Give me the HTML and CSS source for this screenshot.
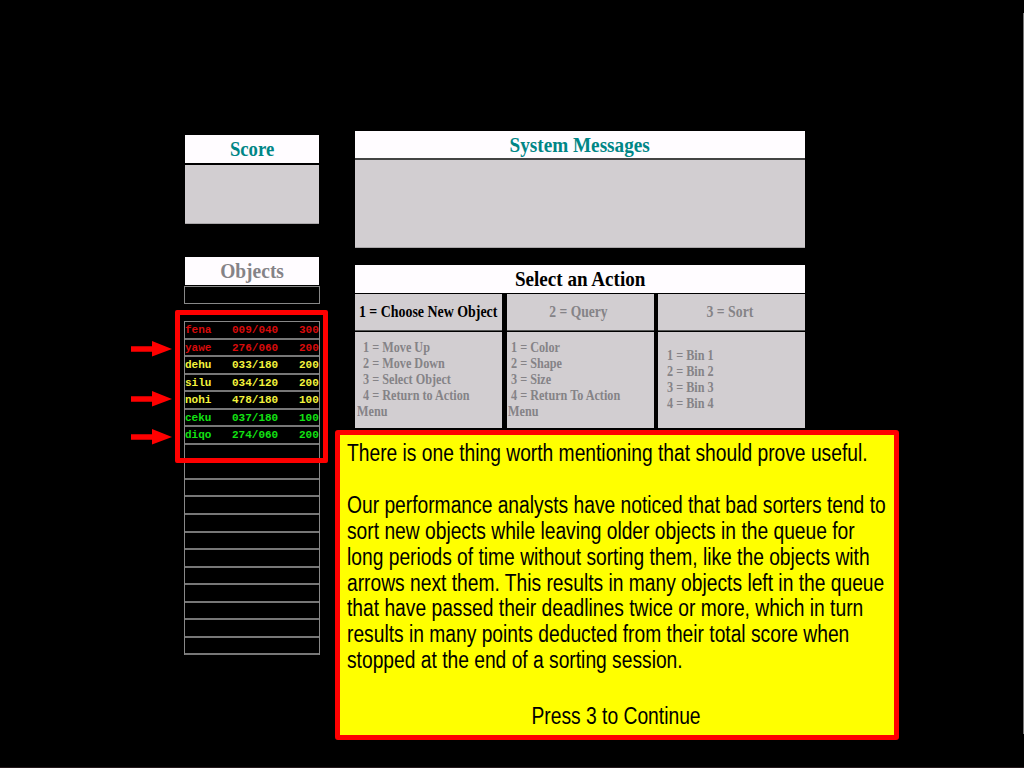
FILE: index.html
```html
<!DOCTYPE html>
<html lang="en">
<head>
<meta charset="utf-8">
<title>Object Sorting</title>
<link rel="stylesheet" href="styles.css">
</head>
<body>
<main class="screen">
  <section class="left">
    <div class="score">
      <h2 class="bar bar-score"><span class="t t-score">Score</span></h2>
      <div class="score-body"></div>
    </div>
    <div class="objects">
      <h2 class="bar bar-objects"><span class="t t-objects">Objects</span></h2>
      <div class="selected"></div>
      <div class="queue">
        <div class="row red"><span class="name">fena</span><span class="time">009/040</span><span class="pts">300</span></div>
        <div class="row red"><span class="name">yawe</span><span class="time">276/060</span><span class="pts">200</span></div>
        <div class="row yellow"><span class="name">dehu</span><span class="time">033/180</span><span class="pts">200</span></div>
        <div class="row yellow"><span class="name">silu</span><span class="time">034/120</span><span class="pts">200</span></div>
        <div class="row yellow"><span class="name">nohi</span><span class="time">478/180</span><span class="pts">100</span></div>
        <div class="row green"><span class="name">ceku</span><span class="time">037/180</span><span class="pts">100</span></div>
        <div class="row green"><span class="name">diqo</span><span class="time">274/060</span><span class="pts">200</span></div>
        <div class="row"></div><div class="row"></div><div class="row"></div><div class="row"></div>
        <div class="row"></div><div class="row"></div><div class="row"></div><div class="row"></div>
        <div class="row"></div><div class="row"></div><div class="row"></div><div class="row"></div>
      </div>
    </div>
  </section>
  <section class="right">
    <div class="messages">
      <h2 class="bar bar-messages"><span class="t t-messages">System Messages</span></h2>
      <div class="messages-body"></div>
    </div>
    <div class="actions">
      <h2 class="bar bar-actions"><span class="t t-actions">Select an Action</span></h2>
      <div class="columns">
        <div class="col">
          <h3 class="head active"><span class="t t-choose">1 = Choose New Object</span></h3>
          <div class="list"><p class="items i1">&nbsp; 1 = Move Up<br>&nbsp; 2 = Move Down<br>&nbsp; 3 = Select Object<br>&nbsp; 4 = Return to Action<br>Menu</p></div>
        </div>
        <div class="col">
          <h3 class="head"><span class="t t-query">2 = Query</span></h3>
          <div class="list"><p class="items i2">&nbsp;1 = Color<br>&nbsp;2 = Shape<br>&nbsp;3 = Size<br>&nbsp;4 = Return To Action<br>Menu</p></div>
        </div>
        <div class="col">
          <h3 class="head"><span class="t t-sort">3 = Sort</span></h3>
          <div class="list short"><p class="items i3">&nbsp; 1 = Bin 1<br>&nbsp; 2 = Bin 2<br>&nbsp; 3 = Bin 3<br>&nbsp; 4 = Bin 4</p></div>
        </div>
      </div>
    </div>
  </section>
</main>
<div class="highlight"></div>
<svg class="arrow a1" width="42" height="16" viewBox="0 0 42 16"><path d="M0 5.3H21V0L41 8L21 15.6V10.7H0Z"/></svg>
<svg class="arrow a2" width="42" height="16" viewBox="0 0 42 16"><path d="M0 5.3H21V0L41 8L21 15.6V10.7H0Z"/></svg>
<svg class="arrow a3" width="42" height="16" viewBox="0 0 42 16"><path d="M0 5.3H21V0L41 8L21 15.6V10.7H0Z"/></svg>
<aside class="callout">
  <p class="note"><span>There is one thing worth mentioning that should prove useful.</span><br><br><span>Our performance analysts have noticed that bad sorters tend to</span><br><span>sort new objects while leaving older objects in the queue for</span><br><span>long periods of time without sorting them, like the objects with</span><br><span>arrows next them. This results in many objects left in the queue</span><br><span>that have passed their deadlines twice or more, which in turn</span><br><span>results in many points deducted from their total score when</span><br><span>stopped at the end of a sorting session.</span></p>
  <p class="press"><span class="t t-press">Press 3 to Continue</span></p>
</aside>
<div class="edge-right"></div>
<div class="edge-bottom"></div>
</body>
</html>
```
FILE: styles.css
```css
* { box-sizing: border-box; }
body { margin: 0; width: 1024px; height: 768px; background: #000; overflow: hidden; position: relative; font-family: "Liberation Serif", "Times New Roman", serif; }
h2, h3, p { margin: 0; }
.screen { display: flex; gap: 35px; padding: 131px 0 0 184px; }
.left { width: 136px; padding-top: 4px; }
.right { width: 450px; }
.bar { display: flex; justify-content: center; align-items: center; height: 28px; background: #fffcff; font-weight: bold; font-size: 22px; line-height: 28px; }
.t { display: inline-block; flex: none; white-space: nowrap; }
.t-score { transform: scaleX(.85); }
.t-objects { transform: scaleX(.885); }
.t-messages { transform: translateX(-.7px) scaleX(.873); }
.t-actions { transform: scaleX(.868); }
.score { margin: 0 1px; }
.bar-score, .bar-messages { color: #008686; }
.score-body { margin-top: 2px; height: 59px; background: #d2ced1; border-bottom: 1px solid #aaa7a9; }
.objects { margin-top: 33px; }
.bar-objects { margin: 0 1px; color: #858387; }
.selected { height: 18px; margin-top: 1px; border: 1px solid #888; }
.queue { margin-top: 17px; border: 1px solid #888; border-bottom: 0; }
.row { display: flex; height: 17.55px; line-height: 17px; border-bottom: 2px solid #777; font-family: "Liberation Mono", monospace; font-weight: bold; font-size: 11px; white-space: pre; }
.name { width: 47px; }
.time { width: 67px; }
.red { color: #d80b0b; }
.yellow { color: #f4f43c; }
.green { color: #12e212; }
.bar-messages { height: 27px; }
.messages-body { height: 90px; background: #d2ced1; border-top: 2px solid #444; border-bottom: 1px solid #aaa7a9; }
.actions { margin-top: 17px; }
.columns { display: grid; grid-template-columns: 147px 147px 147px; gap: 4.5px; }
.head { display: flex; align-items: center; justify-content: center; height: 37px; margin-top: 1px; background: #d2ced1; border-bottom: 1px solid #555; color: #858387; font-size: 17px; }
.active { color: #000; }
.t-choose { transform: translateX(-.5px) scaleX(.818); }
.t-query { transform: translateX(-2px) scaleX(.8); }
.t-sort { transform: translateX(-2px) scaleX(.81); }
.list { height: 96px; margin-top: 1px; padding-top: 7px; background: #d2ced1; color: #858387; font-weight: bold; font-size: 15px; line-height: 16px; white-space: nowrap; }
.short { padding-top: 15px; }
.items { margin-left: 1.5px; transform: scaleX(.812); transform-origin: 0 0; }
.i2 { margin-left: 1px; }
.i3 { margin-left: 2.5px; }
.highlight { position: absolute; left: 175px; top: 310px; width: 153px; height: 153px; border: 5px solid #f00; border-radius: 2px; }
.arrow { position: absolute; left: 131px; fill: #f00; }
.a1 { top: 341px; }
.a2 { top: 391px; }
.a3 { top: 429px; }
.callout { position: absolute; left: 334.5px; top: 430px; width: 564px; height: 310px; padding: 6px 7px; background: #ff0; border: 5px solid #f00; border-radius: 3px; font-family: "Liberation Sans", Arial, sans-serif; font-size: 23px; line-height: 25.9px; color: #000; }
.note { transform: scaleX(.836); transform-origin: 0 0; white-space: nowrap; }
.press { text-align: center; padding-top: 30px; }
.t-press { transform: scaleX(.837); }
.edge-right { position: absolute; left: 1023px; top: 13px; width: 1px; height: 487px; height: 487px; background: #777; }
.edge-bottom { position: absolute; left: 0; top: 767px; width: 1024px; height: 1px; background: #241a1c; }
.edge-right { height: 721px; }
```
